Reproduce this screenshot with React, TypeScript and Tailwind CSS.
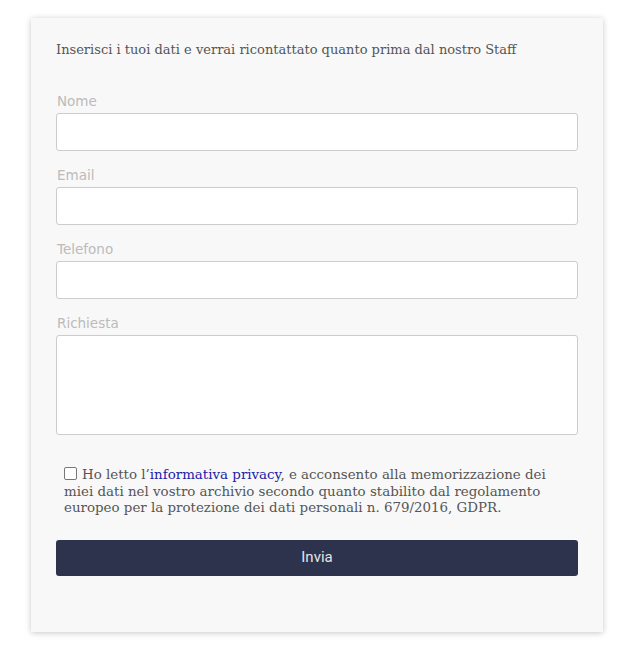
import React from "react";

const serif = { fontFamily: '"DejaVu Serif", "Liberation Serif", serif' };

function Field({ label, tall }: { label: string; tall?: boolean }) {
  return (
    <div className="flex flex-col">
      <label className="text-[13.5px] leading-[16px] text-[#bbbbbb] mb-[4px] ml-px" style={{ fontFamily: '"DejaVu Sans", sans-serif' }}>
        {label}
      </label>
      {tall ? (
        <textarea className="h-[100px] w-full rounded-[3px] border border-[#cccccc] bg-white resize-none" />
      ) : (
        <input className="h-[38px] w-full rounded-[3px] border border-[#cccccc] bg-white" />
      )}
    </div>
  );
}

export default function App() {
  return (
    <div className="min-h-[654px] w-[641px] bg-white pt-[18px]">
      <div className="ml-[31px] w-[572px] h-[614px] bg-[#f8f8f8] shadow-[0_1px_6px_rgba(0,0,0,0.22)] px-[25px] pt-[23px]">
        <p className="text-[13px] leading-[18px] text-[#555555] mb-[34px]" style={serif}>
          Inserisci i tuoi dati e verrai ricontattato quanto prima dal nostro Staff
        </p>
        <div className="flex flex-col gap-[16px]">
          <Field label="Nome" />
          <Field label="Email" />
          <Field label="Telefono" />
          <Field label="Richiesta" tall />
        </div>
        <div className="mt-[32px] pl-[8px] pr-[20px] text-[13.4px] leading-[16.5px] text-[#555555]" style={serif}>
          <span className="inline-block w-[13px] h-[13px] border border-[#777777] rounded-[2px] bg-white align-[-1px] mr-[5px]" />
          Ho letto l’<span className="text-[#2020a8]">informativa privacy</span>, e acconsento alla memorizzazione dei miei dati nel vostro archivio secondo quanto stabilito dal regolamento europeo per la protezione dei dati personali n. 679/2016, GDPR.
        </div>
        <button
          className="mt-[23px] w-full h-[36px] rounded-[3px] bg-[#2d334d] text-[#e4e4ea] text-[15px]"
          style={{ fontFamily: 'Roboto, "Liberation Sans", sans-serif' }}
        >
          Invia
        </button>
      </div>
    </div>
  );
}
